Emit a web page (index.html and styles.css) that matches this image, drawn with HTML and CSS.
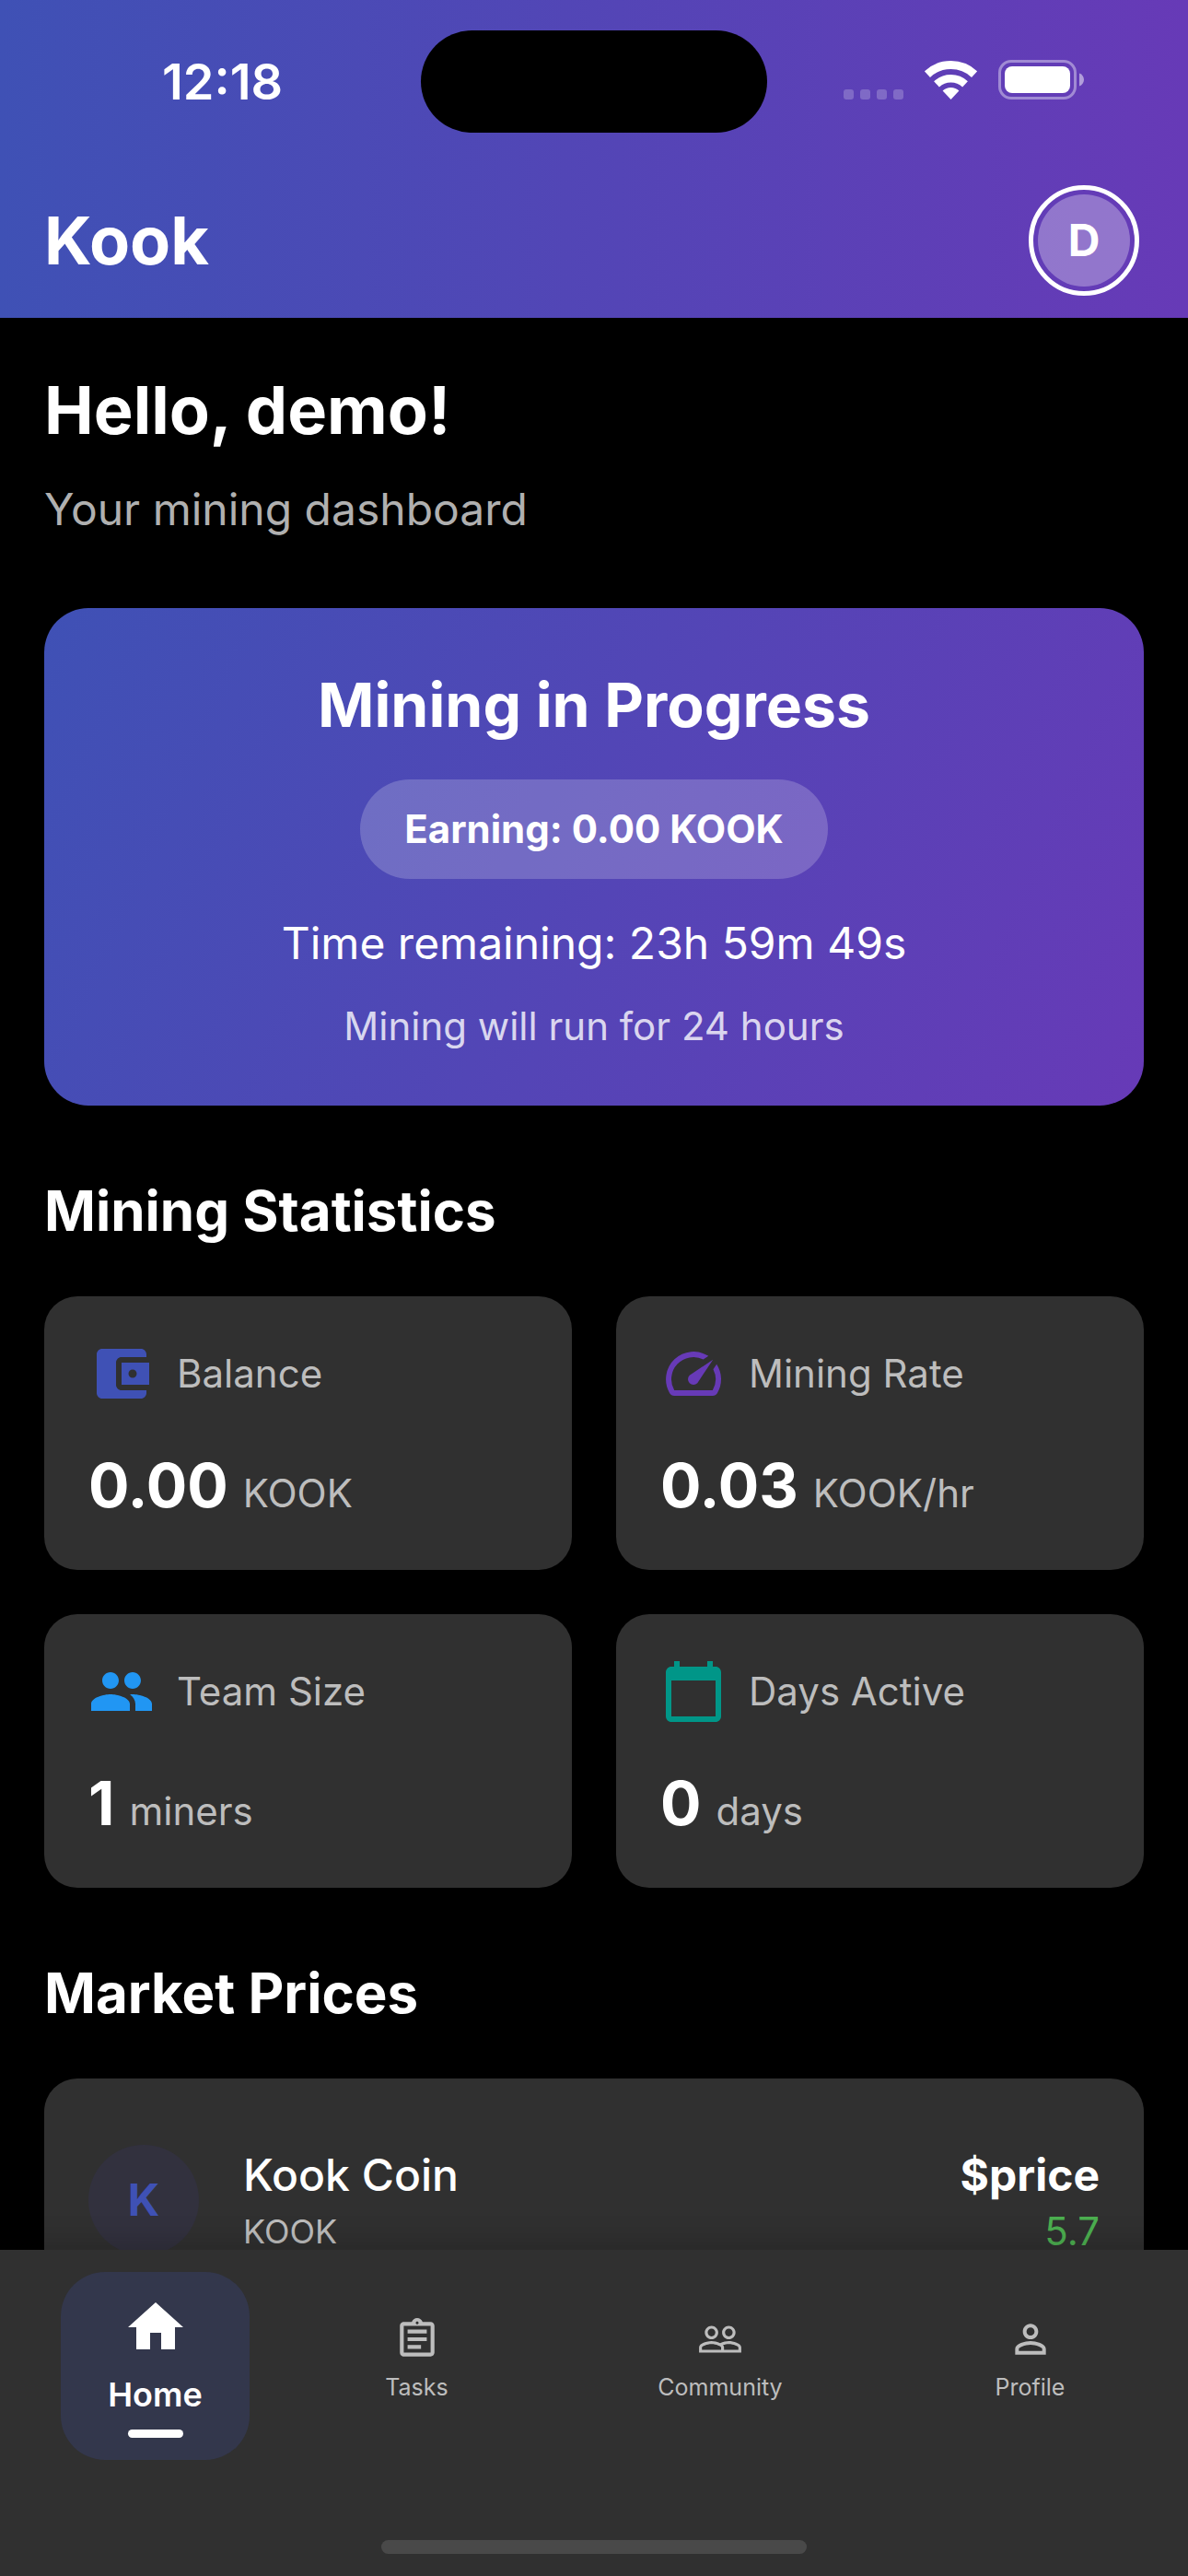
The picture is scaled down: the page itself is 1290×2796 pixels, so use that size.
FILE: index.html
```html
<!DOCTYPE html>
<html lang="en">
<head>
<meta charset="utf-8">
<meta name="viewport" content="width=device-width, initial-scale=1">
<title>Kook</title>
<link rel="stylesheet" href="styles.css">
</head>
<body>
<header class="header">
  <div class="status">
    <time class="status-time">12:18</time>
    <div class="island"></div>
    <div class="status-icons">
      <div class="signal"><i></i><i></i><i></i><i></i></div>
      <svg class="wifi" viewBox="0 0 57 42" aria-label="Wi-Fi">
        <path d="M2.9 14.6A37.5 37.5 0 0 1 54.1 14.6" fill="none" stroke="#fff" stroke-width="9"/>
        <path d="M13 25.4A22.75 22.75 0 0 1 44 25.4" fill="none" stroke="#fff" stroke-width="8.5"/>
        <path d="M28.5 42L19.6 32.5A13 13 0 0 1 37.4 32.5Z" fill="#fff"/>
      </svg>
      <svg class="battery" viewBox="0 0 94 43" aria-label="Battery">
        <rect x="1.5" y="1.5" width="82" height="40" rx="12.5" fill="none" stroke="#fff" stroke-opacity=".4" stroke-width="3"/>
        <rect x="7" y="7" width="71" height="29" rx="8" fill="#fff"/>
        <path d="M88 14.5c3 1 5 4 5 7s-2 6-5 7z" fill="#fff" fill-opacity=".5"/>
      </svg>
    </div>
  </div>
  <div class="appbar">
    <h1 class="brand">Kook</h1>
    <button class="avatar" type="button" aria-label="Account"><span class="avatar-face">D</span></button>
  </div>
</header>

<main class="content">
  <h2 class="greeting">Hello, demo!</h2>
  <p class="subtitle">Your mining dashboard</p>

  <section class="mining">
    <h3 class="mining-title">Mining in Progress</h3>
    <p class="earning">Earning: 0.00 KOOK</p>
    <p class="remaining">Time remaining: 23h 59m 49s</p>
    <p class="duration">Mining will run for 24 hours</p>
  </section>

  <h3 class="section-title">Mining Statistics</h3>
  <section class="stats">
    <article class="stat">
      <div class="stat-head">
        <svg class="icon icon-indigo" viewBox="0 0 24 24"><path d="M21 18v1c0 1.1-.9 2-2 2H5c-1.11 0-2-.9-2-2V5c0-1.1.89-2 2-2h14c1.1 0 2 .9 2 2v1h-9c-1.11 0-2 .9-2 2v8c0 1.1.89 2 2 2h9zm-9-2h10V8H12v8zm4-2.5c-.83 0-1.5-.67-1.5-1.5s.67-1.5 1.5-1.5 1.5.67 1.5 1.5-.67 1.5-1.5 1.5z"/></svg>
        <span>Balance</span>
      </div>
      <p class="stat-value">0.00 <small>KOOK</small></p>
    </article>
    <article class="stat">
      <div class="stat-head">
        <svg class="icon icon-purple" viewBox="0 0 24 24"><path d="M20.38 8.57l-1.23 1.85a8 8 0 0 1-.22 7.58H5.07A8 8 0 0 1 15.58 6.85l1.85-1.23A10 10 0 0 0 3.35 19a2 2 0 0 0 1.72 1h13.85a2 2 0 0 0 1.74-1 10 10 0 0 0-.27-10.44z"/><path d="M10.59 15.41a2 2 0 0 0 2.83 0l5.66-8.49-8.49 5.66a2 2 0 0 0 0 2.83z"/></svg>
        <span>Mining Rate</span>
      </div>
      <p class="stat-value">0.03 <small>KOOK/hr</small></p>
    </article>
    <article class="stat">
      <div class="stat-head">
        <svg class="icon icon-blue" viewBox="0 0 24 24"><path d="M16 11c1.66 0 2.99-1.34 2.99-3S17.66 5 16 5c-1.66 0-3 1.34-3 3s1.34 3 3 3zm-8 0c1.66 0 2.99-1.34 2.99-3S9.66 5 8 5C6.34 5 5 6.34 5 8s1.34 3 3 3zm0 2c-2.33 0-7 1.17-7 3.5V19h14v-2.5c0-2.33-4.67-3.5-7-3.5zm8 0c-.29 0-.62.02-.97.05 1.16.84 1.97 1.97 1.97 3.45V19h6v-2.5c0-2.33-4.67-3.5-7-3.5z"/></svg>
        <span>Team Size</span>
      </div>
      <p class="stat-value">1 <small>miners</small></p>
    </article>
    <article class="stat">
      <div class="stat-head">
        <svg class="icon icon-teal" viewBox="0 0 24 24"><path d="M20 3h-1V1h-2v2H7V1H5v2H4c-1.1 0-2 .9-2 2v16c0 1.1.9 2 2 2h16c1.1 0 2-.9 2-2V5c0-1.1-.9-2-2-2zm0 18H4V8h16v13z"/></svg>
        <span>Days Active</span>
      </div>
      <p class="stat-value">0 <small>days</small></p>
    </article>
  </section>

  <h3 class="section-title">Market Prices</h3>
  <section class="market">
    <div class="coin-badge">K</div>
    <div class="coin">
      <p class="coin-name">Kook Coin</p>
      <p class="coin-symbol">KOOK</p>
    </div>
    <div class="quote">
      <p class="quote-price">$price</p>
      <p class="quote-change">5.7</p>
    </div>
  </section>
</main>

<footer class="bottom">
  <nav class="tabs">
    <a class="tab tab-active" href="#home" aria-current="page">
      <svg class="icon" viewBox="0 0 24 24"><path d="M10 20v-6h4v6h5v-8h3L12 3 2 12h3v8z"/></svg>
      <span>Home</span>
    </a>
    <a class="tab" href="#tasks">
      <svg class="icon" viewBox="0 0 24 24"><path d="M7 15h7v2H7zm0-4h10v2H7zm0-4h10v2H7zm12-4h-4.18C14.4 1.84 13.3 1 12 1c-1.3 0-2.4.84-2.82 2H5c-.14 0-.27.01-.4.04-.39.08-.74.28-1.01.55-.18.18-.33.4-.43.64-.1.23-.16.49-.16.77v14c0 .27.06.54.16.78s.25.45.43.64c.27.27.62.47 1.01.55.13.02.26.03.4.03h14c1.1 0 2-.9 2-2V5c0-1.1-.9-2-2-2zm-7-.25c.41 0 .75.34.75.75s-.34.75-.75.75-.75-.34-.75-.75.34-.75.75-.75zM19 19H5V5h14v14z"/></svg>
      <span>Tasks</span>
    </a>
    <a class="tab" href="#community">
      <svg class="icon" viewBox="0 0 24 24"><path d="M16.5 13c-1.2 0-3.07.34-4.5 1-1.43-.67-3.3-1-4.5-1C5.33 13 1 14.08 1 16.25V19h22v-2.75c0-2.17-4.33-3.25-6.5-3.25zm-4 4.5h-10v-1.25c0-.54 2.56-1.75 5-1.75s5 1.21 5 1.75v1.25zm9 0H14v-1.25c0-.46-.2-.86-.52-1.22.88-.3 1.96-.53 3.02-.53 2.44 0 5 1.21 5 1.75v1.25zM7.5 12c1.93 0 3.5-1.57 3.5-3.5S9.43 5 7.5 5 4 6.57 4 8.5 5.57 12 7.5 12zm0-5.5c1.1 0 2 .9 2 2s-.9 2-2 2-2-.9-2-2 .9-2 2-2zm9 5.5c1.93 0 3.5-1.57 3.5-3.5S18.43 5 16.5 5 13 6.57 13 8.5s1.57 3.5 3.5 3.5zm0-5.5c1.1 0 2 .9 2 2s-.9 2-2 2-2-.9-2-2 .9-2 2-2z"/></svg>
      <span>Community</span>
    </a>
    <a class="tab" href="#profile">
      <svg class="icon" viewBox="0 0 24 24"><path d="M12 5.9c1.16 0 2.1.94 2.1 2.1s-.94 2.1-2.1 2.1S9.9 9.16 9.9 8s.94-2.1 2.1-2.1m0 9c2.97 0 6.1 1.46 6.1 2.1v1.1H5.9V17c0-.64 3.13-2.1 6.1-2.1M12 4C9.79 4 8 5.79 8 8s1.79 4 4 4 4-1.79 4-4-1.79-4-4-4zm0 9c-2.67 0-8 1.34-8 4v3h16v-3c0-2.66-5.33-4-8-4z"/></svg>
      <span>Profile</span>
    </a>
  </nav>
  <div class="home-indicator"></div>
</footer>
</body>
</html>
```
FILE: styles.css
```css
:root {
  --indigo: #3f51b5;
  --purple: #673ab7;
  --surface: #303030;
  --muted: #bdbdbd;
}

* {
  box-sizing: border-box;
}

body {
  margin: 0;
  height: 100vh;
  display: flex;
  flex-direction: column;
  background: #000;
  color: #fff;
  font-family: Inter, "Liberation Sans", sans-serif;
}

h1, h2, h3, p {
  margin: 0;
}

.icon {
  width: 72px;
  height: 72px;
  fill: currentColor;
  flex: none;
}

/* Header */
.header {
  flex: none;
  background: linear-gradient(90deg, var(--indigo), var(--purple));
}

.status {
  display: grid;
  grid-template-columns: 1fr 376px 1fr;
  align-items: center;
  padding: 33px 0;
}

.status-time {
  padding-left: 176px;
  font-size: 54px;
  font-weight: 600;
  line-height: 64px;
}

.island {
  height: 111px;
  border-radius: 56px;
  background: #000;
}

.status-icons {
  display: flex;
  justify-content: flex-end;
  align-items: flex-end;
  gap: 23px;
  padding: 0 112px 4px 0;
}

.signal {
  display: flex;
  gap: 7px;
}

.signal i {
  width: 11px;
  height: 11px;
  border-radius: 3px;
  background: rgba(255, 255, 255, .22);
}

.wifi {
  width: 57px;
  height: 42px;
}

.battery {
  width: 94px;
  height: 43px;
}

.appbar {
  display: flex;
  justify-content: space-between;
  align-items: center;
  height: 168px;
  padding: 0 53px 0 48px;
}

.brand,
.greeting {
  font-size: 72px;
  font-weight: 700;
  line-height: 104px;
}

.avatar {
  width: 120px;
  height: 120px;
  padding: 5px;
  border: 5px solid #fff;
  border-radius: 50%;
  background: none;
  color: #fff;
  font: 700 48px/100px Inter, "Liberation Sans", sans-serif;
}

.avatar-face {
  display: block;
  border-radius: 50%;
  background: rgba(255, 255, 255, .3);
}

/* Scrolling content */
.content {
  flex: 1;
  min-height: 0;
  overflow-y: auto;
  scrollbar-width: none;
  padding: 48px;
}

.greeting {
  margin-bottom: 24px;
}

.subtitle {
  margin-bottom: 75px;
  color: #b0b0b0;
  font-size: 48px;
  line-height: 64px;
}

.mining {
  display: flex;
  flex-direction: column;
  align-items: center;
  padding: 60px 48px 54px;
  border-radius: 48px;
  background: linear-gradient(114deg, var(--indigo), var(--purple));
  text-align: center;
}

.mining-title {
  margin-bottom: 36px;
  font-size: 66px;
  font-weight: 700;
  line-height: 90px;
}

.earning {
  margin-bottom: 36px;
  padding: 24px 48px;
  border-radius: 54px;
  background: rgba(255, 255, 255, .2);
  font-size: 42px;
  font-weight: 700;
  line-height: 60px;
}

.remaining {
  margin-bottom: 24px;
  font-size: 48px;
  line-height: 68px;
}

.duration {
  color: rgba(255, 255, 255, .8);
  font-size: 42px;
  line-height: 64px;
}

.section-title {
  margin: 72px 0 51px;
  font-size: 60px;
  font-weight: 700;
  line-height: 84px;
}

.stats {
  display: grid;
  grid-template-columns: 1fr 1fr;
  gap: 48px;
}

.stat {
  padding: 48px;
  border-radius: 36px;
  background: var(--surface);
}

.stat-head {
  display: flex;
  align-items: center;
  gap: 24px;
  margin-bottom: 42px;
  color: var(--muted);
  font-size: 42px;
  line-height: 60px;
}

.icon-indigo { color: var(--indigo); }
.icon-purple { color: var(--purple); }
.icon-blue { color: #2196f3; }
.icon-teal { color: #009688; }

.stat-value {
  display: flex;
  align-items: baseline;
  gap: 16px;
  font-size: 66px;
  font-weight: 700;
  line-height: 87px;
}

.stat-value small {
  color: var(--muted);
  font-size: 42px;
  font-weight: 400;
  line-height: 42px;
}

.market {
  display: flex;
  align-items: flex-start;
  padding: 72px 48px;
  border-radius: 36px;
  background: var(--surface);
}

.coin-badge {
  width: 120px;
  height: 120px;
  margin-right: 48px;
  border-radius: 50%;
  background: #32313e;
  color: var(--indigo);
  font-size: 48px;
  font-weight: 700;
  line-height: 120px;
  text-align: center;
}

.coin {
  flex: 1;
}

.coin-name,
.quote-price {
  margin-bottom: 8px;
  font-size: 48px;
  font-weight: 500;
  line-height: 66px;
}

.coin-symbol {
  color: var(--muted);
  font-size: 36px;
  line-height: 40px;
}

.quote {
  text-align: right;
}

.quote-price {
  font-weight: 700;
}

.quote-change {
  color: #4caf50;
  font-size: 42px;
  line-height: 40px;
}

/* Bottom navigation */
.bottom {
  position: relative;
  flex: none;
  padding: 24px 66px;
  background: var(--surface);
  box-shadow: 0 -6px 30px rgba(0, 0, 0, .2);
}

.tabs {
  display: grid;
  grid-template-columns: 205fr 197fr 296fr 211fr;
  column-gap: 83px;
  align-items: start;
}

.tab {
  display: flex;
  flex-direction: column;
  align-items: center;
  gap: 12px;
  padding-top: 48px;
  color: var(--muted);
  font-size: 25px;
  line-height: 30px;
  text-decoration: none;
}

.tab .icon {
  width: 50px;
  height: 50px;
}

.tab-active {
  padding: 24px 0;
  border-radius: 48px;
  background: #33374c;
  color: #fff;
  font-size: 36px;
  font-weight: 600;
  line-height: 51px;
}

.tab-active .icon {
  width: 72px;
  height: 72px;
}

.tab-active::after {
  content: "";
  width: 60px;
  height: 9px;
  border-radius: 5px;
  background: #fff;
}

.home-indicator {
  width: 462px;
  max-width: 60%;
  height: 15px;
  margin: 87px auto 0;
  border-radius: 8px;
  background: #494949;
}
```
